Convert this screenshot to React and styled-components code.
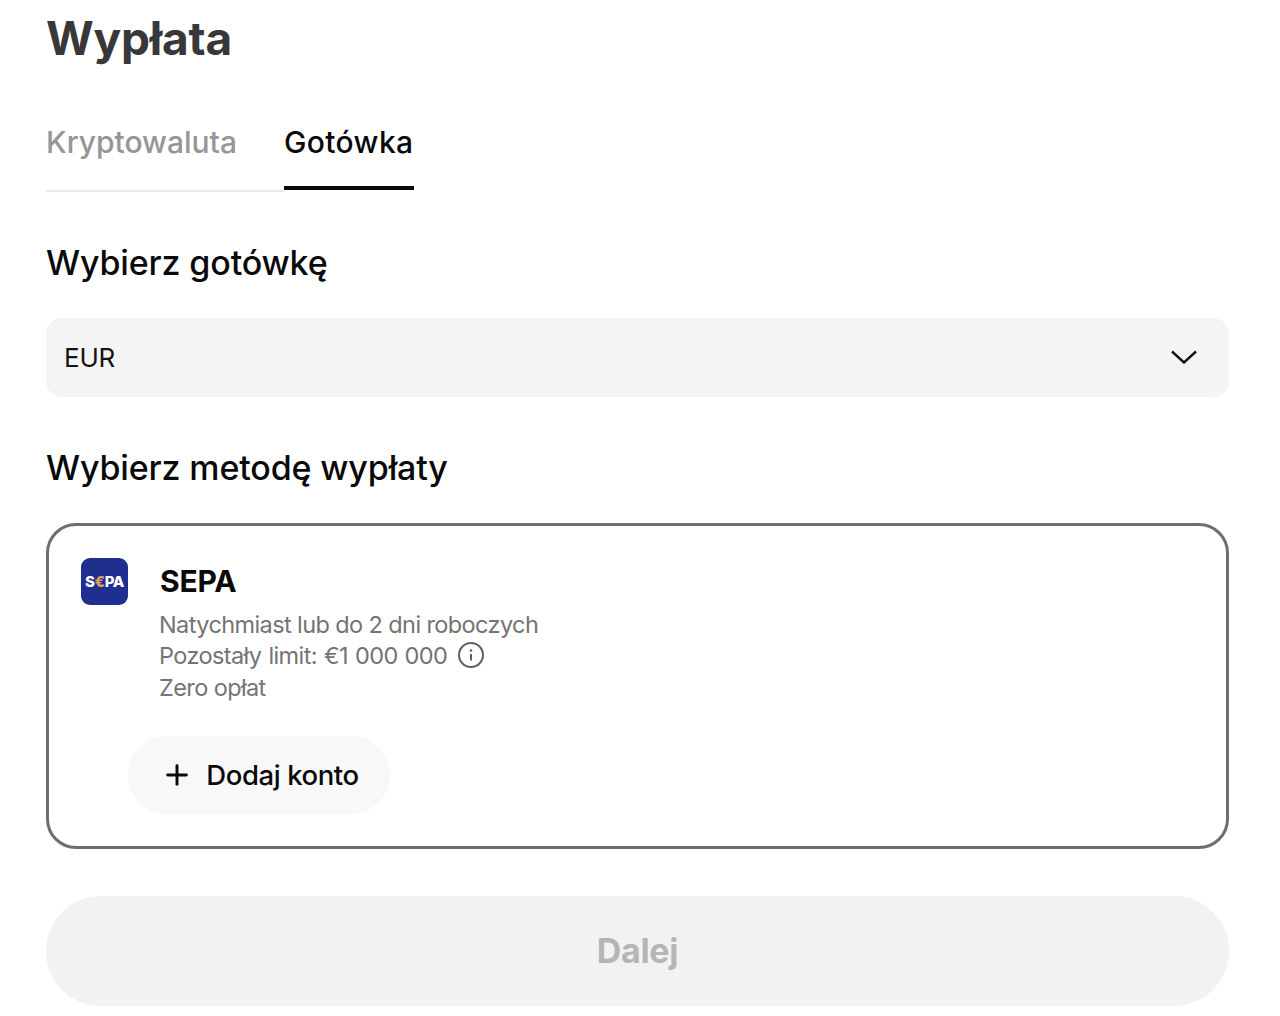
import React from "react";
import styled, { createGlobalStyle } from "styled-components";
import { Plus } from "lucide-react";

const Global = createGlobalStyle`
  html, body { margin: 0; padding: 0; background: #fff; }
  body { font-family: Inter, "Liberation Sans", sans-serif; overflow: hidden; }
`;

const Page = styled.div`
  width: 1183px;
  height: 1016px;
  margin-left: 46px;
  display: flex;
  flex-direction: column;
`;

const Title = styled.h1`
  margin: 10px 0 0;
  font-size: 46px;
  line-height: 56px;
  font-weight: 700;
  letter-spacing: -0.2px;
  color: #383838;
`;

const Tabs = styled.div`
  display: flex;
  align-items: flex-start;
  gap: 47px;
  margin-top: 38px;
  height: 87px;
`;

const Tab = styled.div`
  height: ${(p) => (p.$active ? "86px" : "88px")};
  box-sizing: border-box;
  padding-top: 18px;
  font-size: 30px;
  line-height: 40px;
  font-weight: 500;
  letter-spacing: ${(p) => (p.$active ? "0.4px" : "0")};
  color: ${(p) => (p.$active ? "#0a0a0a" : "#949698")};
  border-bottom: ${(p) => (p.$active ? "4px solid #0a0a0a" : "2px solid #e9e9e9")};
  margin-right: ${(p) => (p.$active ? "0" : "-47px")};
  padding-right: ${(p) => (p.$active ? "0" : "47px")};
`;

const Heading = styled.h2`
  margin: ${(p) => p.$top}px 0 0;
  font-size: 34px;
  line-height: 44px;
  font-weight: 500;
  letter-spacing: -0.15px;
  color: #0a0a0a;
`;

const Select = styled.div`
  margin-top: 33px;
  height: 79px;
  border-radius: 16px;
  background: #f4f4f4;
  display: flex;
  align-items: center;
  justify-content: space-between;
  padding: 0 32px 0 18px;
  box-sizing: border-box;
  font-size: 26px;
  letter-spacing: -0.2px;
  color: #141414;
`;

const Card = styled.div`
  margin-top: 33px;
  height: 326px;
  box-sizing: border-box;
  border: 3px solid #6e6e6e;
  border-radius: 30px;
  padding: 32px 32px 0;
  display: grid;
  grid-template-columns: 47px 1fr;
  column-gap: 31px;
  align-content: start;
`;

const Logo = styled.div`
  width: 47px;
  height: 47px;
  border-radius: 9px;
  background: #1e2f8f;
  color: #fff;
  display: flex;
  align-items: center;
  justify-content: center;
  font-size: 15px;
  font-weight: 800;
  letter-spacing: -0.3px;
`;

const Euro = styled.span`
  color: #e0a060;
`;

const Method = styled.div`
  margin: -1px 0 0 1px;
  font-size: 30px;
  line-height: 48px;
  font-weight: 700;
  letter-spacing: -0.2px;
  color: #0a0a0a;
`;

const Details = styled.div`
  margin-top: 4px;
  font-size: 23.5px;
  line-height: 31.5px;
  letter-spacing: -0.6px;
  color: #747474;
`;

const LimitRow = styled.div`
  display: flex;
  align-items: center;
  gap: 11px;
  word-spacing: 1px;
  margin-top: -1px;
  margin-bottom: 1px;
`;

const AddButton = styled.div`
  grid-column: 1 / 3;
  margin: 32px 0 0 47px;
  width: 262px;
  height: 78px;
  border-radius: 39px;
  background: #f8f8f8;
  display: flex;
  align-items: center;
  justify-content: center;
  gap: 13px;
  padding-left: 2px;
  box-sizing: border-box;
  font-size: 27.5px;
  font-weight: 500;
  letter-spacing: -0.4px;
  color: #0a0a0a;
`;

const NextButton = styled.div`
  margin-top: 47px;
  height: 110px;
  padding-bottom: 2px;
  box-sizing: border-box;
  border-radius: 55px;
  background: #f2f2f2;
  display: flex;
  align-items: center;
  justify-content: center;
  font-size: 34px;
  font-weight: 700;
  letter-spacing: -0.3px;
  color: #b5b5b5;
`;

const ChevronSvg = styled.svg`
  margin-top: -2px;
`;

function ChevronIcon() {
  return (
    <ChevronSvg width="26" height="14" viewBox="0 0 26 14" fill="none">
      <path d="M1 1.5L13 12.5L25 1.5" stroke="#141414" strokeWidth="2.4" />
    </ChevronSvg>
  );
}

function InfoIcon() {
  return (
    <svg width="26" height="26" viewBox="0 0 26 26" fill="none">
      <circle cx="13" cy="13" r="12" stroke="#5f5f5f" strokeWidth="2" />
      <circle cx="13" cy="8.5" r="1.3" fill="#5f5f5f" />
      <path d="M13 12V18.5" stroke="#5f5f5f" strokeWidth="2" />
    </svg>
  );
}

export default function App() {
  return (
    <Page>
      <Global />
      <Title>Wypłata</Title>
      <Tabs>
        <Tab>Kryptowaluta</Tab>
        <Tab $active>Gotówka</Tab>
      </Tabs>
      <Heading $top={50}>Wybierz gotówkę</Heading>
      <Select>
        EUR
        <ChevronIcon />
      </Select>
      <Heading $top={49}>Wybierz metodę wypłaty</Heading>
      <Card>
        <Logo>
          S<Euro>€</Euro>PA
        </Logo>
        <div>
          <Method>SEPA</Method>
          <Details>
            <div>Natychmiast lub do 2 dni roboczych</div>
            <LimitRow>
              Pozostały limit: €1 000 000 <InfoIcon />
            </LimitRow>
            <div>Zero opłat</div>
          </Details>
        </div>
        <AddButton>
          <Plus size={32} strokeWidth={2.2} />
          Dodaj konto
        </AddButton>
      </Card>
      <NextButton>Dalej</NextButton>
    </Page>
  );
}
